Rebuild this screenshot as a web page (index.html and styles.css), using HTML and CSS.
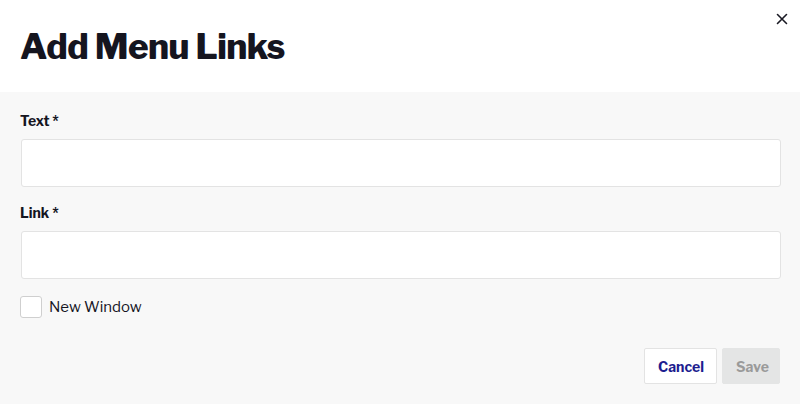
FILE: index.html
```html
<!DOCTYPE html>
<html>
<head>
<meta charset="utf-8">
<link rel="stylesheet" href="styles.css">
</head>
<body>
<div class="modal">
  <header class="head">
    <h1 class="title">Add Menu Links</h1>
    <button class="close" aria-label="Close">
      <svg width="12" height="12" viewBox="0 0 12 12"><path d="M1.5 1.5L10.5 10.5M10.5 1.5L1.5 10.5" stroke="#1a1a24" stroke-width="1.6" stroke-linecap="round"/></svg>
    </button>
  </header>
  <div class="body">
    <label class="label">Text *</label>
    <input class="input" type="text">
    <label class="label">Link *</label>
    <input class="input" type="text">
    <label class="check"><span class="box"></span><span>New Window</span></label>
    <div class="actions">
      <button class="btn cancel">Cancel</button>
      <button class="btn save">Save</button>
    </div>
  </div>
</div>
</body>
</html>
```
FILE: styles.css
```css
* { box-sizing: border-box; }
html, body { margin: 0; padding: 0; }
body { font-family: "Libre Franklin", Inter, "Liberation Sans", sans-serif; color: #15151f; background: #f8f8f8; width: 800px; height: 404px; overflow: hidden; }
.modal { display: flex; flex-direction: column; height: 404px; }
.head { background: #fff; height: 92px; position: relative; display: flex; align-items: center; padding: 0 20px; }
.title { margin: 0; font-size: 35px; font-weight: 800; letter-spacing: -0.5px; padding-top: 1px; }
.close { position: absolute; right: 10px; top: 11px; width: 16px; height: 16px; border: 0; background: none; padding: 0; display: flex; align-items: center; justify-content: center; }
.body { flex: 1; background: #f8f8f8; padding: 19px 20px 0; display: flex; flex-direction: column; }
.label { font-size: 14px; font-weight: 700; line-height: 20px; margin-bottom: 8px; }
.input { height: 48px; width: 760px; border: 1px solid #e3e3e3; border-radius: 3px; background: #fff; margin-bottom: 16px; margin-left: 1px; }
.check { display: flex; align-items: center; gap: 7px; font-size: 15px; line-height: 22px; margin-top: 1px; }
.box { width: 22px; height: 22px; border: 1px solid #cfcfcf; border-radius: 3px; background: #fff; }
.actions { display: flex; justify-content: flex-end; gap: 5px; margin-top: 30px; }
.btn { height: 36px; font-family: inherit; font-size: 14px; font-weight: 700; border-radius: 2px; padding: 0 13px; }
.cancel { background: #fff; border: 1px solid #e3e3e3; color: #1d1d8f; width: 73px; }
.save { background: #e4e5e5; border: 1px solid #e4e5e5; color: #9a9a9a; width: 58px; }
```
